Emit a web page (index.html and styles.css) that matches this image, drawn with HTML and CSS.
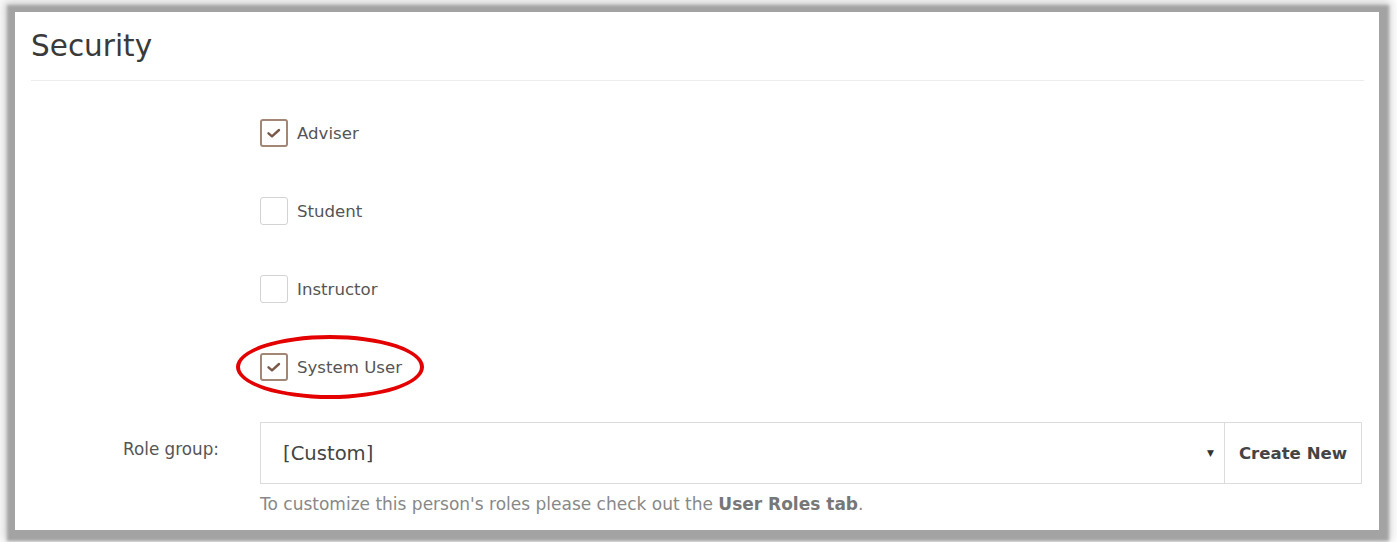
FILE: index.html
```html
<!DOCTYPE html>
<html>
<head>
<meta charset="utf-8">
<link rel="stylesheet" href="styles.css">
</head>
<body>
<div class="panel">
  <div class="header"><h1 class="title">Security</h1></div>
  <div class="form">
    <div class="row check-row">
      <div class="label"></div>
      <label class="check">
        <span class="box checked"><svg width="16" height="12" viewBox="0 0 16 12"><path d="M2.5 6.3 L6 9.3 L13 3" fill="none" stroke="#7a5848" stroke-width="2.4" stroke-linecap="round" stroke-linejoin="round"/></svg></span>
        <span class="text">Adviser</span>
      </label>
    </div>
    <div class="row check-row">
      <div class="label"></div>
      <label class="check">
        <span class="box"></span>
        <span class="text">Student</span>
      </label>
    </div>
    <div class="row check-row">
      <div class="label"></div>
      <label class="check">
        <span class="box"></span>
        <span class="text">Instructor</span>
      </label>
    </div>
    <div class="row check-row">
      <div class="label"></div>
      <label class="check highlight">
        <span class="box checked"><svg width="16" height="12" viewBox="0 0 16 12"><path d="M2.5 6.3 L6 9.3 L13 3" fill="none" stroke="#7a5848" stroke-width="2.4" stroke-linecap="round" stroke-linejoin="round"/></svg></span>
        <span class="text">System User</span>
        <span class="ring"></span>
      </label>
    </div>
    <div class="row select-row">
      <div class="label role-label">Role group:</div>
      <div class="field">
        <div class="input-group">
          <div class="select"><span class="value">[Custom]</span><span class="arrow">▼</span></div>
          <div class="btn">Create New</div>
        </div>
        <div class="help">To customize this person's roles please check out the <b>User Roles tab</b>.</div>
      </div>
    </div>
  </div>
</div>
</body>
</html>
```
FILE: styles.css
```css
html, body {
  margin: 0;
  padding: 0;
  background: #ffffff;
}
body {
  width: 1397px;
  height: 542px;
  overflow: hidden;
  padding: 12px 0 0 15px;
  box-sizing: border-box;
  font-family: "DejaVu Sans", Verdana, sans-serif;
}
.panel {
  width: 1364px;
  height: 518px;
  background: #fff;
  box-sizing: border-box;
  padding: 0 15px 0 16px;
  box-shadow: 1px 2px 3px 9px #a3a3a3, 0 0 10px 12px #d6d6d6;
}
.header {
  height: 68px;
  border-bottom: 1px solid #ececec;
  display: flex;
  align-items: center;
}
.title {
  margin: 0;
  font-weight: normal;
  font-size: 29.5px;
  color: #3a3a3a;
  padding-top: 0;
}
.form {
  padding-top: 13px;
}
.row {
  display: grid;
  grid-template-columns: 188px 1fr;
  column-gap: 41px;
}
.check-row {
  height: 78px;
  align-items: center;
}
.check {
  display: flex;
  align-items: center;
  position: relative;
  width: max-content;
}
.box {
  width: 28px;
  height: 28px;
  box-sizing: border-box;
  border: 1.5px solid #d3d3d3;
  border-radius: 3px;
  display: flex;
  align-items: center;
  justify-content: center;
  background: #fff;
}
.box.checked {
  border: 2px solid #a28676;
}
.text {
  margin-left: 9px;
  font-size: 16.6px;
  color: #555;
}
.ring {
  position: absolute;
  left: -24px;
  top: -18px;
  width: 188px;
  height: 64px;
  box-sizing: border-box;
  border: 4px solid #e50000;
  border-radius: 50%;
}
.select-row {
  margin-top: 16px;
}
.role-label {
  text-align: right;
  font-size: 16.8px;
  color: #555;
  padding-top: 17px;
}
.input-group {
  display: flex;
  height: 62px;
  width: 1102px;
}
.select {
  flex: 1;
  border: 1px solid #dcdcdc;
  display: flex;
  align-items: center;
  justify-content: space-between;
  padding: 0 10px 0 22px;
  box-sizing: border-box;
}
.value {
  font-size: 19.6px;
  color: #444;
}
.arrow {
  font-size: 9px;
  color: #333;
}
.btn {
  width: 137px;
  box-sizing: border-box;
  border: 1px solid #dcdcdc;
  border-left: none;
  display: flex;
  align-items: center;
  justify-content: center;
  font-weight: bold;
  font-size: 16.6px;
  color: #444;
}
.help {
  margin-top: 10px;
  font-size: 17px;
  color: #888;
}
.help b {
  color: #777;
}
```
